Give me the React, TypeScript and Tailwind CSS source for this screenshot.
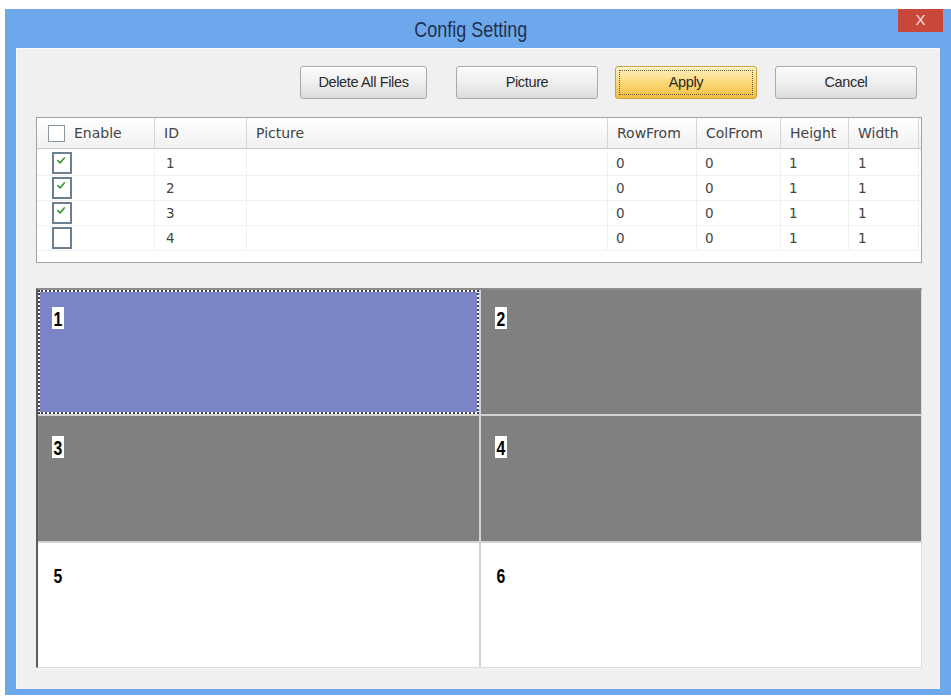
import React from "react";

type Row = { id: number; checked: boolean };

const rows: Row[] = [
  { id: 1, checked: true },
  { id: 2, checked: true },
  { id: 3, checked: true },
  { id: 4, checked: false },
];

const columns = [
  { label: "ID", w: "w-[92px]" },
  { label: "Picture", w: "w-[361px]" },
  { label: "RowFrom", w: "w-[89px]" },
  { label: "ColFrom", w: "w-[84px]" },
  { label: "Height", w: "w-[68px]" },
  { label: "Width", w: "w-[70px]" },
];

function CheckBox({ checked, size }: { checked: boolean; size: "sm" | "lg" }) {
  return (
    <div
      className={
        size === "lg"
          ? "relative w-[20px] h-[22px] border-2 border-[#6b7f92] bg-white"
          : "relative w-[17px] h-[17px] border border-[#8a97a3] bg-white"
      }
    >
      {checked && (
        <svg
          viewBox="0 0 10 10"
          className="absolute left-[2px] top-[2px] w-[10px] h-[9px]"
        >
          <path
            d="M1.5 5.2 L4 7.6 L8.6 2.2"
            fill="none"
            stroke="#3f9a3a"
            strokeWidth="1.9"
            strokeLinecap="round"
            strokeLinejoin="round"
          />
        </svg>
      )}
    </div>
  );
}

function Button({
  label,
  w,
  primary,
}: {
  label: string;
  w: string;
  primary?: boolean;
}) {
  if (primary) {
    return (
      <div
        className={`${w} h-[33px] rounded-[3px] border border-[#d1a13a] bg-gradient-to-b from-[#fff1c4] via-[#fbd877] to-[#f2bf43] p-[3px] shadow-[inset_0_1px_0_rgba(255,255,255,0.7)]`}
      >
        <div className="h-full w-full border border-dotted border-[#6a5a2a] flex items-center justify-center text-[14.5px] text-[#2a2a2a] tracking-tight">
          {label}
        </div>
      </div>
    );
  }
  return (
    <div
      className={`${w} h-[33px] rounded-[3px] border border-[#a9a9a9] bg-gradient-to-b from-[#fbfbfb] via-[#efefef] to-[#dcdcdc] flex items-center justify-center text-[14.5px] text-[#2a2a2a] tracking-tight shadow-[inset_0_1px_0_#ffffff]`}
    >
      {label}
    </div>
  );
}

function CellLabel({ text, boxed }: { text: string; boxed: boolean }) {
  return (
    <div
      className={`inline-flex h-[22px] w-[12px] items-center justify-center ${
        boxed ? "bg-white" : ""
      }`}
    >
      <span className="inline-block scale-x-75 font-bold text-[21px] leading-none text-black">
        {text}
      </span>
    </div>
  );
}

export default function App() {
  return (
    <div
      className="w-[951px] h-[699px] bg-white pt-[9px] pl-[5px] overflow-hidden"
      style={{ fontFamily: "'Liberation Sans', Arial, sans-serif" }}
    >
      <div className="relative w-[946px] h-[686px] bg-[#6ea8ec] flex flex-col px-[11px] pb-[6px]">
        {/* title bar */}
        <div className="h-[39px] flex items-center justify-center text-[20px] text-[#1e3251] pr-[14px]">
          <span className="inline-block scale-x-90 scale-y-110">Config Setting</span>
        </div>
        <div className="absolute top-0 right-[8px] w-[45px] h-[23px] bg-[#c7473a] flex items-center justify-center text-[#f4e0dc] text-[15px]">
          X
        </div>

        {/* client area */}
        <div className="flex-1 bg-[#f0f0f0] border-t border-l border-[#fafafa] flex flex-col pl-[19px] pr-[18px]">
          <div className="h-[17px]" />
          <div className="flex justify-end h-[33px]">
            <Button label="Delete All Files" w="w-[127px]" />
            <div className="w-[29px]" />
            <Button label="Picture" w="w-[142px]" />
            <div className="w-[17px]" />
            <Button label="Apply" w="w-[142px]" primary />
            <div className="w-[18px]" />
            <Button label="Cancel" w="w-[142px]" />
            <div className="w-[5px]" />
          </div>

          {/* table */}
          <div
            className="mt-[18px] h-[146px] border border-[#a3a3a3] bg-white flex flex-col text-[14px] text-[#444444]"
            style={{ fontFamily: "'DejaVu Sans', sans-serif" }}
          >
            <div className="h-[31px] flex border-b border-[#c8c8c8] bg-gradient-to-b from-[#ffffff] to-[#f1f1f1]">
              <div className="w-[118px] flex items-center gap-[9px] pl-[11px] border-r border-[#d6d6d6]">
                <CheckBox checked={false} size="sm" />
                <span>Enable</span>
              </div>
              {columns.map((c) => (
                <div
                  key={c.label}
                  className={`${c.w} flex items-center pl-[9px] border-r border-[#d6d6d6]`}
                >
                  {c.label}
                </div>
              ))}
            </div>
            <div className="flex flex-col pt-[2px] text-[13.5px]">
              {rows.map((r) => (
                <div key={r.id} className="h-[25px] flex border-b border-[#f0f0f0]">
                  <div className="w-[118px] flex items-center pl-[15px] border-r border-[#f0f0f0]">
                    <CheckBox checked={r.checked} size="lg" />
                  </div>
                  <div className="w-[92px] flex items-center pl-[11px] border-r border-[#f0f0f0]">{r.id}</div>
                  <div className="w-[361px] border-r border-[#f0f0f0]" />
                  <div className="w-[89px] flex items-center pl-[8px] border-r border-[#f0f0f0]">0</div>
                  <div className="w-[84px] flex items-center pl-[8px] border-r border-[#f0f0f0]">0</div>
                  <div className="w-[68px] flex items-center pl-[8px] border-r border-[#f0f0f0]">1</div>
                  <div className="w-[70px] flex items-center pl-[9px] border-r border-[#f0f0f0]">1</div>
                </div>
              ))}
            </div>
          </div>

          {/* layout preview */}
          <div className="mt-[25px] h-[380px] border-t-2 border-l-2 border-t-[#8c8c8c] border-l-[#5c5c5c] border-r border-b border-r-[#dcdcdc] border-b-[#dcdcdc] bg-[#d2d2d2] grid grid-cols-2 grid-rows-3 gap-[2px]">
            <div className="border-2 border-dotted border-[#3d4060] bg-white">
              <div className="h-full bg-[#7b84c6] pt-[15px] pl-[12px]">
                <CellLabel text="1" boxed />
              </div>
            </div>
            <div className="bg-[#808080] pt-[17px] pl-[14px]">
              <CellLabel text="2" boxed />
            </div>
            <div className="bg-[#808080] pt-[20px] pl-[14px]">
              <CellLabel text="3" boxed />
            </div>
            <div className="bg-[#808080] pt-[20px] pl-[14px]">
              <CellLabel text="4" boxed />
            </div>
            <div className="bg-white pt-[22px] pl-[14px]">
              <CellLabel text="5" boxed={false} />
            </div>
            <div className="bg-white pt-[22px] pl-[14px]">
              <CellLabel text="6" boxed={false} />
            </div>
          </div>
        </div>
      </div>
    </div>
  );
}
